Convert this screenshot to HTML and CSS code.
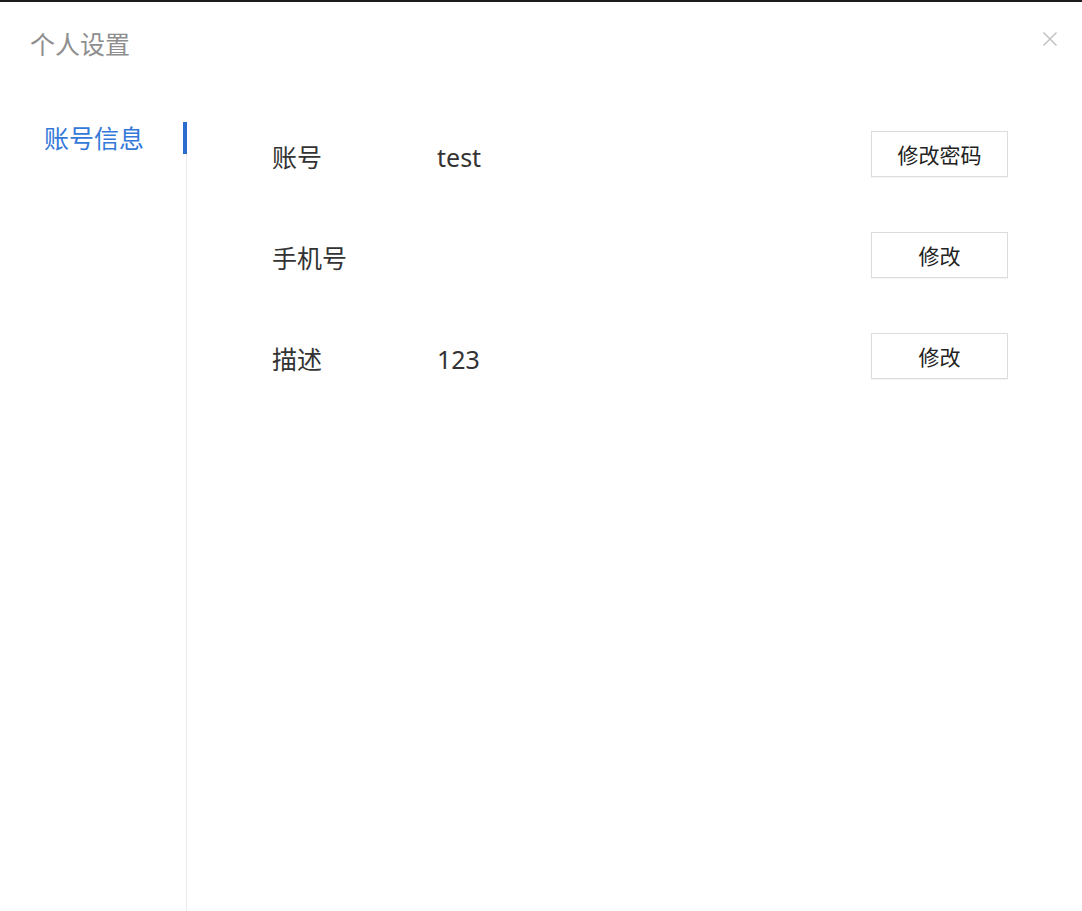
FILE: index.html
```html
<!DOCTYPE html>
<html lang="zh-CN">
<head>
<meta charset="utf-8">
<title>个人设置</title>
<link rel="stylesheet" href="styles.css">
</head>
<body>
<div class="page">
  <header class="header">
    <h1 class="title">个人设置</h1>
    <button class="close" aria-label="关闭">
      <svg viewBox="0 0 16 16" width="16" height="16"><path d="M1.5 1.5 L14.5 14.5 M14.5 1.5 L1.5 14.5" stroke="#c2c2c2" stroke-width="1.5" fill="none"/></svg>
    </button>
  </header>
  <div class="main">
    <aside class="sidebar">
      <div class="menu-item active">账号信息</div>
    </aside>
    <section class="content">
      <div class="row">
        <span class="label">账号</span>
        <span class="value">test</span>
        <button class="btn">修改密码</button>
      </div>
      <div class="row">
        <span class="label">手机号</span>
        <span class="value"></span>
        <button class="btn">修改</button>
      </div>
      <div class="row">
        <span class="label">描述</span>
        <span class="value">123</span>
        <button class="btn">修改</button>
      </div>
    </section>
  </div>
</div>
</body>
</html>
```
FILE: styles.css
```css
* { box-sizing: border-box; }
html, body { margin: 0; padding: 0; height: 100%; }
body {
  background: #fff;
  font-family: "Noto Sans", "Noto Sans CJK SC", sans-serif;
  color: #333;
}
.page {
  min-height: 100vh;
  border-top: 2px solid #1c1c1c;
  display: flex;
  flex-direction: column;
}
.header {
  height: 120px;
  display: flex;
  justify-content: space-between;
  align-items: flex-start;
  padding: 27px 24px 0 30px;
}
.title {
  margin: 0;
  font-size: 25px;
  font-weight: normal;
  line-height: 30px;
  color: #8e8e8e;
}
.close {
  border: 0;
  background: none;
  padding: 0;
  margin-top: 2px;
  width: 16px;
  height: 16px;
  cursor: pointer;
}
.close svg { display: block; }
.main {
  flex: 1;
  display: flex;
}
.sidebar {
  width: 187px;
  flex: none;
  border-right: 1px solid #ececec;
}
.menu-item {
  height: 32px;
  line-height: 32px;
  padding-left: 44px;
  font-size: 25px;
  color: #3478d8;
  margin-right: -1px;
  position: relative;
}
.menu-item.active {
  border-right: 4px solid #2c6cd0;
}
.content {
  flex: 1;
  padding: 9px 74px 0 85px;
}
.row {
  display: flex;
  align-items: center;
  height: 46px;
  margin-bottom: 55px;
}
.label {
  width: 165px;
  font-size: 25px;
  line-height: 30px;
  padding-top: 5px;
  color: #333;
}
.value {
  flex: 1;
  font-size: 25px;
  line-height: 30px;
  padding-top: 5px;
  color: #333;
}
.btn {
  width: 137px;
  height: 46px;
  border: 1px solid #dcdcdc;
  background: #fff;
  font-family: "Noto Sans", "Noto Sans CJK SC", sans-serif;
  font-size: 21px;
  color: #222;
  padding: 0;
  box-shadow: 0 1px 1px rgba(0,0,0,0.04);
}
```
